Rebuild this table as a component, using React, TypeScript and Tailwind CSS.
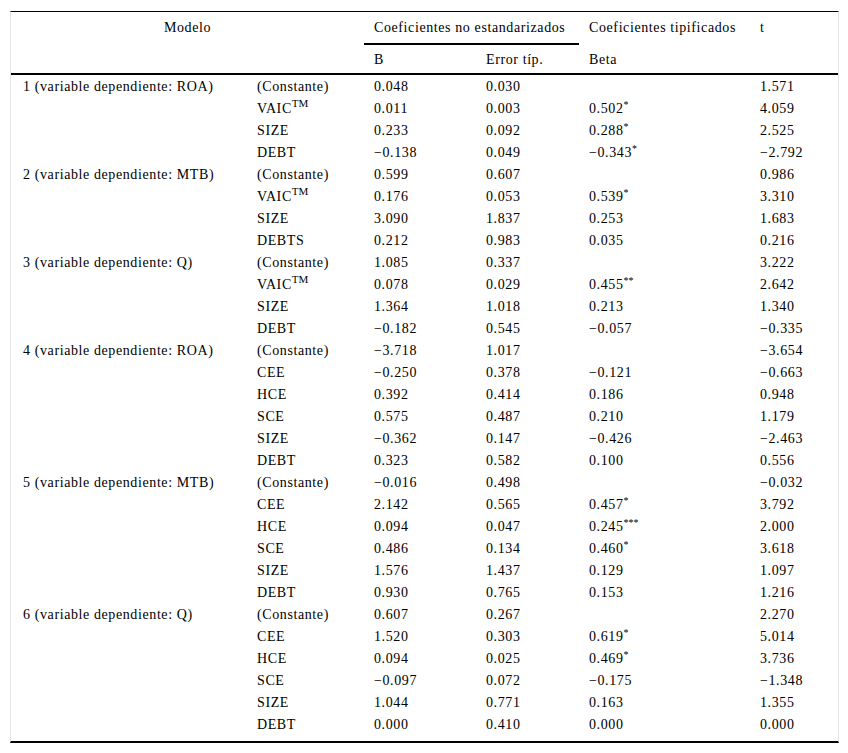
type Row = {
  variable: string;
  tm?: boolean;
  b: string;
  error: string;
  beta?: string;
  stars?: string;
  t: string;
};

type Model = {
  label: string;
  rows: Row[];
};

const models: Model[] = [
  {
    label: "1 (variable dependiente: ROA)",
    rows: [
      { variable: "(Constante)", b: "0.048", error: "0.030", t: "1.571" },
      { variable: "VAIC", tm: true, b: "0.011", error: "0.003", beta: "0.502", stars: "*", t: "4.059" },
      { variable: "SIZE", b: "0.233", error: "0.092", beta: "0.288", stars: "*", t: "2.525" },
      { variable: "DEBT", b: "−0.138", error: "0.049", beta: "−0.343", stars: "*", t: "−2.792" },
    ],
  },
  {
    label: "2 (variable dependiente: MTB)",
    rows: [
      { variable: "(Constante)", b: "0.599", error: "0.607", t: "0.986" },
      { variable: "VAIC", tm: true, b: "0.176", error: "0.053", beta: "0.539", stars: "*", t: "3.310" },
      { variable: "SIZE", b: "3.090", error: "1.837", beta: "0.253", t: "1.683" },
      { variable: "DEBTS", b: "0.212", error: "0.983", beta: "0.035", t: "0.216" },
    ],
  },
  {
    label: "3 (variable dependiente: Q)",
    rows: [
      { variable: "(Constante)", b: "1.085", error: "0.337", t: "3.222" },
      { variable: "VAIC", tm: true, b: "0.078", error: "0.029", beta: "0.455", stars: "**", t: "2.642" },
      { variable: "SIZE", b: "1.364", error: "1.018", beta: "0.213", t: "1.340" },
      { variable: "DEBT", b: "−0.182", error: "0.545", beta: "−0.057", t: "−0.335" },
    ],
  },
  {
    label: "4 (variable dependiente: ROA)",
    rows: [
      { variable: "(Constante)", b: "−3.718", error: "1.017", t: "−3.654" },
      { variable: "CEE", b: "−0.250", error: "0.378", beta: "−0.121", t: "−0.663" },
      { variable: "HCE", b: "0.392", error: "0.414", beta: "0.186", t: "0.948" },
      { variable: "SCE", b: "0.575", error: "0.487", beta: "0.210", t: "1.179" },
      { variable: "SIZE", b: "−0.362", error: "0.147", beta: "−0.426", t: "−2.463" },
      { variable: "DEBT", b: "0.323", error: "0.582", beta: "0.100", t: "0.556" },
    ],
  },
  {
    label: "5 (variable dependiente: MTB)",
    rows: [
      { variable: "(Constante)", b: "−0.016", error: "0.498", t: "−0.032" },
      { variable: "CEE", b: "2.142", error: "0.565", beta: "0.457", stars: "*", t: "3.792" },
      { variable: "HCE", b: "0.094", error: "0.047", beta: "0.245", stars: "***", t: "2.000" },
      { variable: "SCE", b: "0.486", error: "0.134", beta: "0.460", stars: "*", t: "3.618" },
      { variable: "SIZE", b: "1.576", error: "1.437", beta: "0.129", t: "1.097" },
      { variable: "DEBT", b: "0.930", error: "0.765", beta: "0.153", t: "1.216" },
    ],
  },
  {
    label: "6 (variable dependiente: Q)",
    rows: [
      { variable: "(Constante)", b: "0.607", error: "0.267", t: "2.270" },
      { variable: "CEE", b: "1.520", error: "0.303", beta: "0.619", stars: "*", t: "5.014" },
      { variable: "HCE", b: "0.094", error: "0.025", beta: "0.469", stars: "*", t: "3.736" },
      { variable: "SCE", b: "−0.097", error: "0.072", beta: "−0.175", t: "−1.348" },
      { variable: "SIZE", b: "1.044", error: "0.771", beta: "0.163", t: "1.355" },
      { variable: "DEBT", b: "0.000", error: "0.410", beta: "0.000", t: "0.000" },
    ],
  },
];

const cell = "h-[22px] py-0 pl-[10px] pr-0 align-middle whitespace-nowrap";

export default function App() {
  return (
    <div
      className="min-h-[753px] bg-white pt-[11px] text-[14px] leading-[17px] tracking-[0.6px] text-black"
      style={{ fontFamily: '"Liberation Serif", "Times New Roman", serif' }}
    >
      <table className="ml-[10px] w-[827px] table-fixed border-separate border-spacing-0 border-x border-t border-b-2 border-x-[#e6e6e6] border-t-black border-b-black text-left">
        <colgroup>
          <col className="w-[236px]" />
          <col className="w-[117px]" />
          <col className="w-[112px]" />
          <col className="w-[103px]" />
          <col className="w-[171px]" />
          <col className="w-[88px]" />
        </colgroup>
        <thead>
          <tr>
            <th colSpan={2} className="h-[33px] p-0 pt-[7px] text-center align-top font-normal">
              Modelo
            </th>
            <th colSpan={2} className="h-[33px] border-b-2 border-black p-0 pt-[7px] pl-[10px] align-top font-normal whitespace-nowrap">
              Coeficientes no estandarizados
            </th>
            <th className="h-[33px] p-0 pt-[7px] pl-[10px] align-top font-normal whitespace-nowrap">
              Coeficientes tipificados
            </th>
            <th className="h-[33px] p-0 pt-[7px] pl-[10px] align-top font-normal">t</th>
          </tr>
          <tr>
            <th className="h-[30px] border-b-2 border-black p-0" />
            <th className="h-[30px] border-b-2 border-black p-0" />
            <th className="h-[30px] border-b-2 border-black p-0 pt-[6px] pl-[10px] align-top font-normal">B</th>
            <th className="h-[30px] border-b-2 border-black p-0 pt-[6px] pl-[10px] align-top font-normal">
              Error típ.
            </th>
            <th className="h-[30px] border-b-2 border-black p-0 pt-[6px] pl-[10px] align-top font-normal">Beta</th>
            <th className="h-[30px] border-b-2 border-black p-0" />
          </tr>
        </thead>
        <tbody>
          {models.map((model) =>
            model.rows.map((row, i) => (
              <tr key={model.label + i}>
                <td className={`${cell} pl-[12px]`}>{i === 0 ? model.label : ""}</td>
                <td className={cell}>
                  {row.variable}
                  {row.tm && <sup className="text-[11px] tracking-normal">TM</sup>}
                </td>
                <td className={cell}>{row.b}</td>
                <td className={cell}>{row.error}</td>
                <td className={cell}>
                  {row.beta}
                  {row.stars && <sup className="text-[10px] tracking-normal">{row.stars}</sup>}
                </td>
                <td className={cell}>{row.t}</td>
              </tr>
            ))
          )}
          <tr>
            <td colSpan={6} className="h-[6px] p-0" />
          </tr>
        </tbody>
      </table>
    </div>
  );
}
